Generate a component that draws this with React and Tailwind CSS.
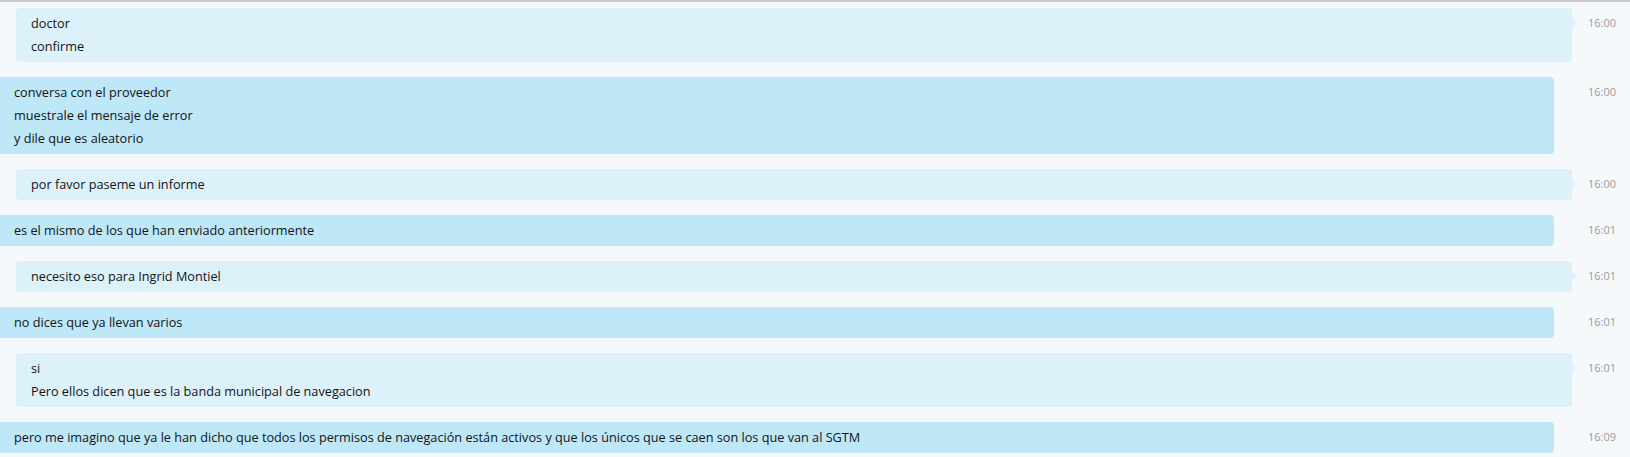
import React from "react";

const messages = [
  { mine: false, time: "16:00", lines: ["doctor", "confirme"] },
  { mine: true, time: "16:00", lines: ["conversa con el proveedor", "muestrale el mensaje de error", "y dile que es aleatorio"] },
  { mine: false, time: "16:00", lines: ["por favor paseme un informe"] },
  { mine: true, time: "16:01", lines: ["es el mismo de los que han enviado anteriormente"] },
  { mine: false, time: "16:01", lines: ["necesito eso para Ingrid Montiel"] },
  { mine: true, time: "16:01", lines: ["no dices que ya llevan varios"] },
  { mine: false, time: "16:01", lines: ["si", "Pero ellos dicen que es la banda municipal de navegacion"] },
  { mine: true, time: "16:09", lines: ["pero me imagino que ya le han dicho que todos los permisos de navegación están activos y que los únicos que se caen son los que van al SGTM"] },
];

function Row({ m }) {
  return (
    <div className="flex items-start">
      <div className={m.mine ? "flex-1 pr-[18px]" : "flex-1 pl-[16px]"}>
        <div
          className={
            m.mine
              ? "relative rounded-r-[4px] bg-[#bee7f7] pl-[14px] pr-3 py-[4px]"
              : "relative rounded-[4px] bg-[#dcf1fa] pl-[15px] pr-3 py-[4px]"
          }
        >
          {m.lines.map((l, i) => (
            <div key={i} className="leading-[23px]">{l}</div>
          ))}
          {!m.mine && (
            <div className="absolute right-[-5px] top-[10px] h-0 w-0 border-y-[5px] border-l-[5px] border-y-transparent border-l-[#dcf1fa]" />
          )}
        </div>
      </div>
      <div className="w-[58px] shrink-0 pl-[16px] pt-[8px] text-[11px] leading-[14px] text-[#9a9a9a]">
        {m.time}
      </div>
    </div>
  );
}

export default function App() {
  return (
    <div
      className="h-[457px] w-[1630px] overflow-hidden border-t-2 border-[#c9c9c9] bg-[#f5f9fc] pt-[6px] text-[12.7px] text-[#141414]"
      style={{ fontFamily: '"Open Sans", "Noto Sans", sans-serif' }}
    >
      <div className="flex flex-col gap-[15px]">
        {messages.map((m, i) => (
          <Row key={i} m={m} />
        ))}
      </div>
    </div>
  );
}
